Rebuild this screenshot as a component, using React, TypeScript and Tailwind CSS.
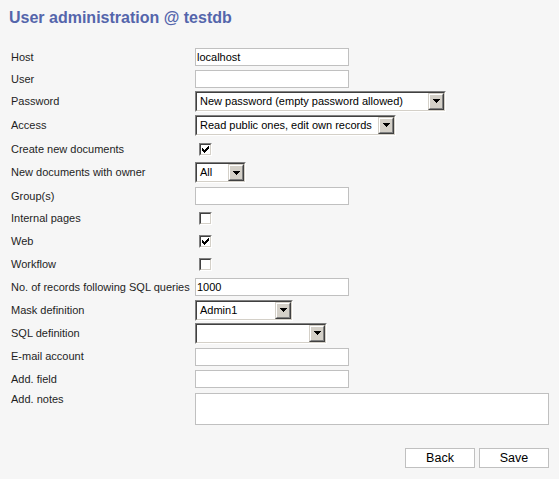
import React from "react";

function Check({ checked }: { checked?: boolean }) {
  return (
    <div className="ml-[4px] w-[13px] h-[13px] border border-t-[#808080] border-l-[#808080] border-r-white border-b-white">
      <div className="w-full h-full bg-white border border-t-[#404040] border-l-[#404040] border-r-[#d4d0c8] border-b-[#d4d0c8]">
        {checked && (
          <svg width="9" height="9" viewBox="0 0 9 9" shapeRendering="crispEdges" className="block">
            <rect x="1" y="3" width="1" height="3" fill="#000" />
            <rect x="2" y="4" width="1" height="3" fill="#000" />
            <rect x="3" y="5" width="1" height="3" fill="#000" />
            <rect x="4" y="4" width="1" height="3" fill="#000" />
            <rect x="5" y="3" width="1" height="3" fill="#000" />
            <rect x="6" y="2" width="1" height="3" fill="#000" />
            <rect x="7" y="1" width="1" height="3" fill="#000" />
          </svg>
        )}
      </div>
    </div>
  );
}

function Select({ className, text }: { className: string; text?: string }) {
  return (
    <div className={"border border-t-[#808080] border-l-[#808080] border-r-white border-b-white " + className}>
      <div className="h-full flex bg-white border border-t-[#404040] border-l-[#404040] border-r-[#d4d0c8] border-b-[#d4d0c8]">
        <div className="flex-1 pl-[3px] flex items-center text-[11px] text-black whitespace-nowrap overflow-hidden">
          {text}
        </div>
        <div className="w-[16px] h-full bg-[#d4d0c8] border border-t-[#d4d0c8] border-l-[#d4d0c8] border-r-[#404040] border-b-[#404040]">
          <div className="h-full border border-t-white border-l-white border-r-[#808080] border-b-[#808080] flex items-center justify-center">
            <svg width="7" height="4" viewBox="0 0 7 4" shapeRendering="crispEdges" className="block">
              <rect x="0" y="0" width="7" height="1" fill="#000" />
              <rect x="1" y="1" width="5" height="1" fill="#000" />
              <rect x="2" y="2" width="3" height="1" fill="#000" />
              <rect x="3" y="3" width="1" height="1" fill="#000" />
            </svg>
          </div>
        </div>
      </div>
    </div>
  );
}

function TextInput({ value }: { value?: string }) {
  return (
    <input
      readOnly
      value={value ?? ""}
      className="w-[154px] h-[18px] bg-white border border-[#c0c0c0] text-[11px] text-black pl-[1px] outline-none"
    />
  );
}

function Row({ label, h, children }: { label: string; h: string; children?: React.ReactNode }) {
  return (
    <div className={"flex items-center " + h}>
      <div className="w-[184px] text-[11px] text-[#1e1e1e] whitespace-nowrap">{label}</div>
      {children}
    </div>
  );
}

export default function App() {
  return (
    <div className="w-[559px] h-[479px] bg-[#f6f6f6] font-['Liberation_Sans',Arial,sans-serif] overflow-hidden">
      <div className="pl-[9px] pt-[10px] text-[16px] leading-[16px] font-bold text-[#5465ab]">
        User administration @ testdb
      </div>
      <div className="mt-[20px] pl-[11px] pr-[10px]">
        <Row label="Host" h="h-[22px]">
          <TextInput value="localhost" />
        </Row>
        <Row label="User" h="h-[22px]">
          <TextInput />
        </Row>
        <Row label="Password" h="h-[22px]">
          <Select className="w-[251px] h-[21px]" text="New password (empty password allowed)" />
        </Row>
        <Row label="Access" h="h-[26px]">
          <Select className="w-[201px] h-[21px]" text="Read public ones, edit own records" />
        </Row>
        <Row label="Create new documents" h="h-[22px]">
          <Check checked />
        </Row>
        <Row label="New documents with owner" h="h-[25px]">
          <Select className="w-[51px] h-[21px]" text="All" />
        </Row>
        <Row label="Group(s)" h="h-[22px]">
          <TextInput />
        </Row>
        <Row label="Internal pages" h="h-[22px]">
          <Check />
        </Row>
        <Row label="Web" h="h-[24px]">
          <Check checked />
        </Row>
        <Row label="Workflow" h="h-[22px]">
          <Check />
        </Row>
        <Row label="No. of records following SQL queries" h="h-[24px]">
          <TextInput value="1000" />
        </Row>
        <Row label="Mask definition" h="h-[22px]">
          <Select className="w-[98px] h-[21px]" text="Admin1" />
        </Row>
        <Row label="SQL definition" h="h-[24px]">
          <Select className="w-[132px] h-[21px]" />
        </Row>
        <Row label="E-mail account" h="h-[23px]">
          <TextInput />
        </Row>
        <Row label="Add. field" h="h-[22px]">
          <TextInput />
        </Row>
        <div className="flex items-start pt-[3px]">
          <div className="w-[184px] text-[11px] leading-[13px] text-[#1e1e1e]">Add. notes</div>
          <textarea
            readOnly
            className="w-[355px] h-[32px] bg-white border border-[#c0c0c0] resize-none outline-none block"
          />
        </div>
        <div className="flex justify-end gap-[4px] mt-[23px]">
          <button className="w-[70px] h-[20px] bg-white border border-[#c0c0c0] text-[12.5px] leading-none text-black">
            Back
          </button>
          <button className="w-[70px] h-[20px] bg-white border border-[#c0c0c0] text-[12.5px] leading-none text-black">
            Save
          </button>
        </div>
      </div>
    </div>
  );
}
